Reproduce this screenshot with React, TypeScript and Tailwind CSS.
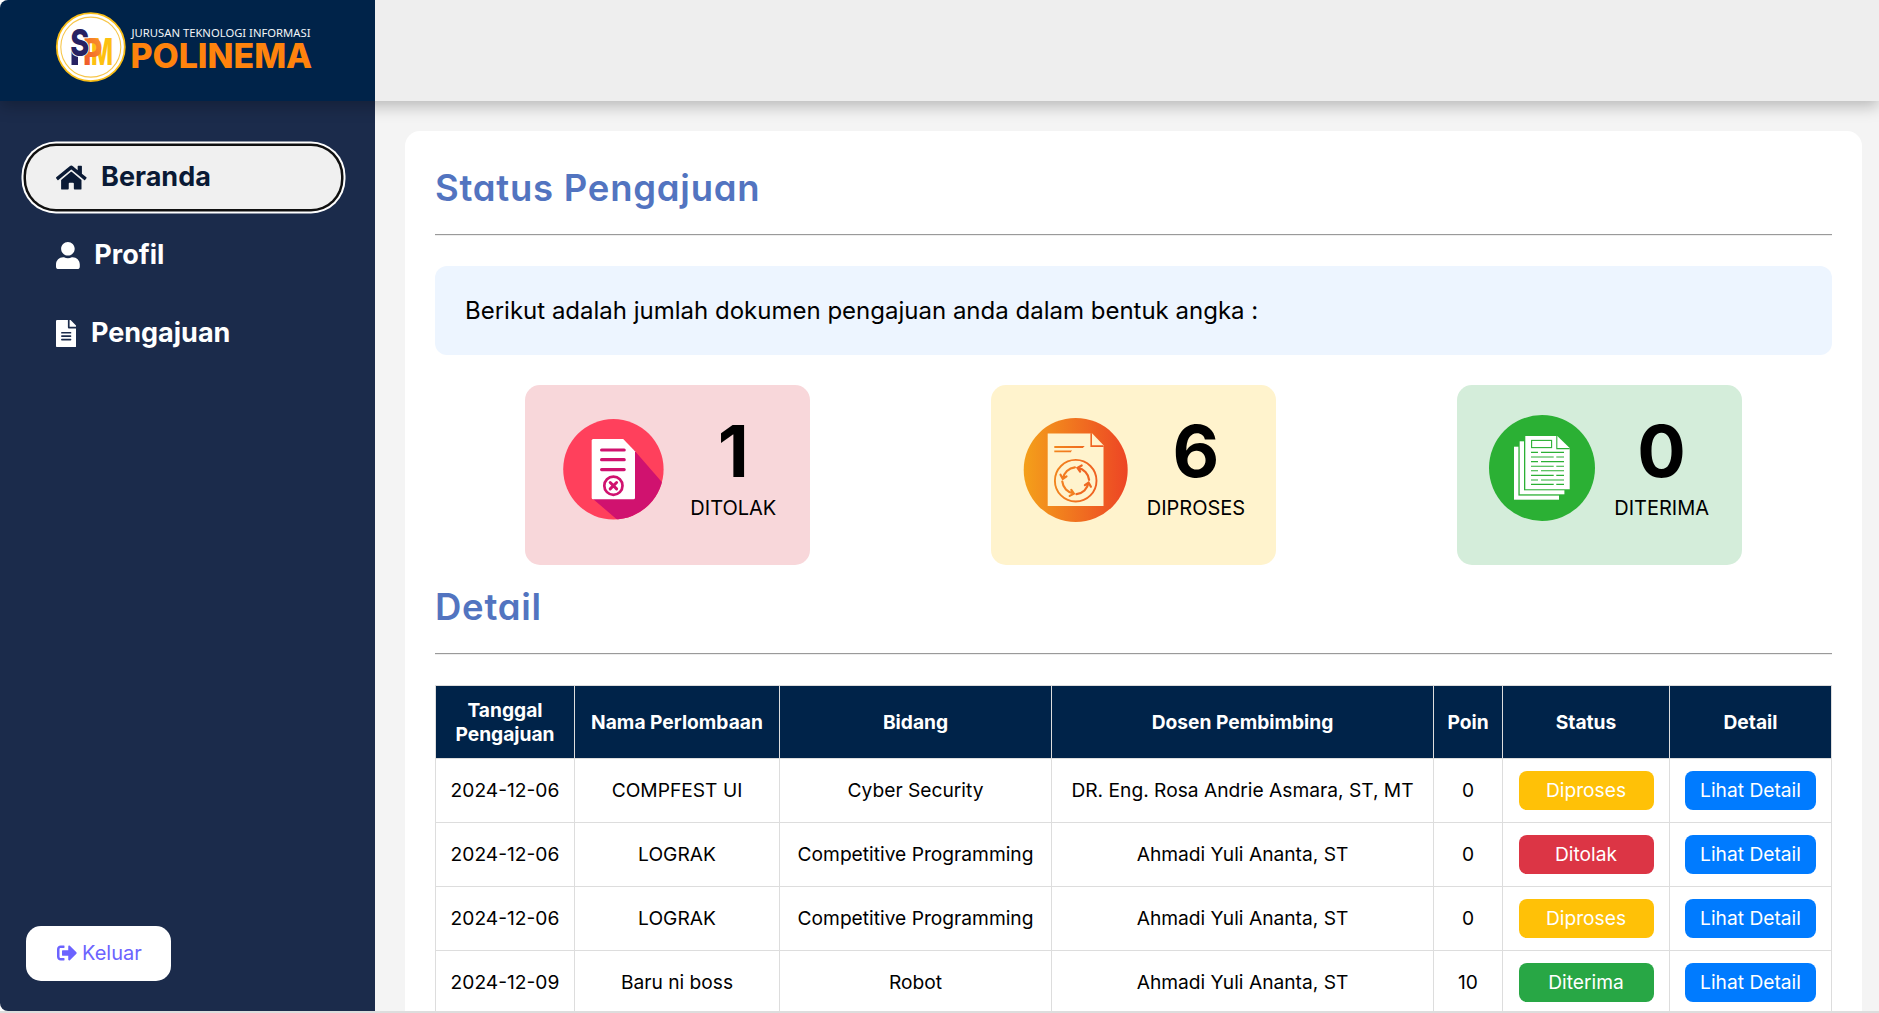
import type { ReactNode } from "react";
import { FaFileAlt, FaHome, FaSignOutAlt, FaUser } from "react-icons/fa";

function Logo() {
  return (
    <svg width="260" height="74" viewBox="54 10 260 74" className="block">
      <defs>
        <linearGradient id="logo-p" x1="0" y1="1" x2="1" y2="0">
          <stop offset="0" stopColor="#ee4a2b" />
          <stop offset="1" stopColor="#fba22a" />
        </linearGradient>
      </defs>
      <circle cx="90.8" cy="47.1" r="34" fill="#fff" stroke="#f9bd16" strokeWidth="1.8" />
      <circle cx="90.8" cy="47.1" r="30" fill="none" stroke="#f7c64a" strokeWidth="1.1" />
      <g fontFamily="Inter, sans-serif" fontWeight="800">
        <rect x="71.5" y="50" width="6.5" height="15" fill="#272262" />
        <text x="91" y="65" fontSize="37.5" textLength="22" lengthAdjust="spacingAndGlyphs" fill="#fdc010">M</text>
        <text x="83" y="65" fontSize="37.5" textLength="19.5" lengthAdjust="spacingAndGlyphs" fill="url(#logo-p)">P</text>
        <text
          x="70.2" y="55.5" fontSize="37" textLength="19" lengthAdjust="spacingAndGlyphs"
          fill="#272262" stroke="#fff" strokeWidth="1.8" style={{ paintOrder: "stroke" }}
        >
          S
        </text>
      </g>
      <text
        x="131.5" y="37.4" fontSize="11.6" textLength="179" lengthAdjust="spacingAndGlyphs"
        fontFamily="'Noto Sans', sans-serif" fill="#f2f5f8"
      >
        JURUSAN TEKNOLOGI INFORMASI
      </text>
      <text
        x="130.4" y="67.9" fontSize="33.6" textLength="181.8" lengthAdjust="spacingAndGlyphs"
        fontFamily="Inter, sans-serif" fontWeight="800" fill="#ff830d"
      >
        POLINEMA
      </text>
    </svg>
  );
}

function RejectedIcon() {
  return (
    <svg width="140" height="180" viewBox="0 0 140 180" className="shrink-0">
      <clipPath id="rejected-disc">
        <circle cx="88.4" cy="84.3" r="50.2" />
      </clipPath>
      <circle cx="88.4" cy="84.3" r="50.2" fill="#ff405c" />
      <path d="M109 65L150 112V150H110L67.5 113.5Z" fill="#d0126f" clipPath="url(#rejected-disc)" />
      <path d="M68.2 54H98.2L110 66.2V112.8Q110 114.3 108.5 114.3H68.2Q66.7 114.3 66.7 112.8V55.5Q66.7 54 68.2 54Z" fill="#fff" />
      <g stroke="#d0126f" fill="none" strokeLinecap="round">
        <path d="M76.6 65H99.2M76.6 74.7H99.2M76.6 84.6H99.2" strokeWidth="3.2" />
        <circle cx="88.4" cy="100.7" r="9.1" strokeWidth="2.7" />
        <path d="M85.2 97.5L91.6 103.9M91.6 97.5L85.2 103.9" strokeWidth="3" />
      </g>
    </svg>
  );
}

function ProcessIcon() {
  return (
    <svg width="140" height="180" viewBox="0 0 140 180" className="shrink-0">
      <defs>
        <linearGradient id="process-fill" gradientUnits="userSpaceOnUse" x1="32.7" y1="0" x2="136.7" y2="0">
          <stop offset="0" stopColor="#f4a01a" />
          <stop offset="1" stopColor="#ed4525" />
        </linearGradient>
      </defs>
      <circle cx="84.7" cy="84.9" r="52" fill="url(#process-fill)" />
      <path d="M56.7 48.5H101.3L112.5 60.2V121H56.7Z" fill="#fff3cd" />
      <g stroke="url(#process-fill)" fill="none">
        <path d="M100.2 48.3V61.1H112.6" strokeWidth="1.6" />
        <path d="M63.3 62.05H92.3V62.06M63.3 66.35H80V66.36" strokeWidth="1.9" />
        <circle cx="84.7" cy="95.7" r="20.8" strokeWidth="1.9" />
      </g>
      <g transform="translate(84.7 95.7)" fill="none" strokeWidth="2.2" strokeLinecap="round">
        {[["0", "#ef6522"], ["90", "#ef6a22"], ["180", "#f27f20"], ["270", "#f27b20"]].map(([angle, color]) => (
          <path
            key={angle}
            transform={`rotate(${angle})`}
            stroke={color}
            d="M13.4 -.8A13.4 13.4 0 0 0 2 -12.8M6 -15.2L1.8 -12.9L4.4 -9.2"
          />
        ))}
      </g>
    </svg>
  );
}

function AcceptedIcon() {
  const green = "#2bb034";
  return (
    <svg width="140" height="180" viewBox="0 0 140 180" className="shrink-0">
      <circle cx="85" cy="83" r="53" fill={green} />
      <rect x="57" y="61.7" width="45" height="53" fill="#fff" />
      <rect x="61.4" y="55" width="47.2" height="55.6" fill={green} />
      <rect x="62.7" y="56.3" width="44.7" height="53" fill="#fff" />
      <rect x="67" y="49.7" width="47" height="55.6" fill={green} />
      <path d="M68.3 51H100.3L112.7 63V104.2H68.3Z" fill="#fff" />
      <g stroke={green} fill="none" strokeWidth="1.1">
        <path d="M99.8 51V63.6H112.7" />
        <rect x="74.6" y="55.4" width="20" height="7.2" />
        <path d="M74 67.4h7M84 67.4h23M74 76.6h7M84 76.6h23M74 85.8h7M84 85.8h23M74 95h7M84 95h23" />
        <path d="M74 72h22.7M99.3 72h7.7M74 81.2h22.7M99.3 81.2h7.7M74 90.4h22.7M99.3 90.4h7.7M74 99.4h22.7M99.3 99.4h7.7" />
      </g>
    </svg>
  );
}

function NavItem({ icon, label, active }: { icon: ReactNode; label: string; active?: boolean }) {
  return (
    <a
      className={
        "flex h-[63px] w-[315px] items-center gap-[14.5px] rounded-[30px] pl-[30px] text-[27px] font-bold " +
        (active
          ? "bg-[#f0f0f0] text-[#0a1a35] shadow-[0_0_0_2.5px_#101010,0_0_0_4.5px_#ffffff]"
          : "text-white")
      }
    >
      {icon}
      <span>{label}</span>
    </a>
  );
}

function SectionTitle({ children }: { children: ReactNode }) {
  return (
    <>
      <h2 className="h-[55px] text-[36.5px] leading-[54px] font-semibold tracking-[0.75px] text-[#5274c0] [font-feature-settings:'cv11']">
        {children}
      </h2>
      <div className="mt-[18px] mb-[30px] h-[2px] border-t border-b border-t-[#9a9a9a] border-b-[#eeeeee]" />
    </>
  );
}

function StatCard({ color, icon, value, label, shift }: { color: string; icon: ReactNode; value: string; label: string; shift?: string }) {
  return (
    <div className={"flex h-[180px] w-[285px] rounded-[15px] " + color}>
      {icon}
      <div className={"flex w-[130px] shrink-0 flex-col items-center pt-[22px] " + (shift ?? "")}>
        <span className="text-[72px] leading-[88px] font-bold">{value}</span>
        <span className="text-[20px] leading-[27px]">{label}</span>
      </div>
    </div>
  );
}

const badge: Record<string, string> = {
  Diproses: "bg-[#ffc107]",
  Ditolak: "bg-[#dc3545]",
  Diterima: "bg-[#28a745]",
};

const rows = [
  ["2024-12-06", "COMPFEST UI", "Cyber Security", "DR. Eng. Rosa Andrie Asmara, ST, MT", "0", "Diproses"],
  ["2024-12-06", "LOGRAK", "Competitive Programming", "Ahmadi Yuli Ananta, ST", "0", "Ditolak"],
  ["2024-12-06", "LOGRAK", "Competitive Programming", "Ahmadi Yuli Ananta, ST", "0", "Diproses"],
  ["2024-12-09", "Baru ni boss", "Robot", "Ahmadi Yuli Ananta, ST", "10", "Diterima"],
];

const headers = ["Tanggal Pengajuan", "Nama Perlombaan", "Bidang", "Dosen Pembimbing", "Poin", "Status", "Detail"];

export default function App() {
  return (
    <div className="h-[1013px] w-[1879px] overflow-hidden border-b-2 border-[#dddddd] bg-white font-['Inter',sans-serif] text-black">
      <div className="flex h-[1011px] flex-col overflow-hidden rounded-l-[8px] bg-[#f4f4f4]">
        <header className="relative z-10 flex h-[101px] shrink-0 bg-[#eeeeee] shadow-[0_5px_15px_rgba(0,0,0,0.25)]">
          <div className="w-[375px] bg-[#002349] pt-[10px] pl-[54px]">
            <Logo />
          </div>
        </header>
        <div className="flex min-h-0 flex-1">
          <aside className="flex w-[375px] shrink-0 flex-col justify-between bg-[#1b2b4b] px-[26px] pt-[45px] pb-[30px]">
            <nav className="flex flex-col gap-[15px]">
              <NavItem icon={<FaHome className="h-[27.2px] w-[30.6px]" />} label="Beranda" active />
              <NavItem icon={<FaUser className="h-[27.2px] w-[23.8px]" />} label="Profil" />
              <NavItem icon={<FaFileAlt className="h-[27.2px] w-[20.4px]" />} label="Pengajuan" />
            </nav>
            <button className="flex h-[55px] w-[145px] items-center gap-[5px] rounded-[15px] bg-white pb-px pl-[31px] text-[20px] text-[#6c63ff]">
              <FaSignOutAlt className="size-[20px]" />
              <span>Keluar</span>
            </button>
          </aside>
          <main className="min-w-0 flex-1 overflow-hidden pt-[30px] pr-[17px] pl-[30px]">
            <section className="min-h-full rounded-t-[15px] bg-white p-[30px]">
              <SectionTitle>Status Pengajuan</SectionTitle>
              <p className="flex h-[89px] items-center rounded-[12px] bg-[#edf5ff] pl-[30px] text-[24px]">
                Berikut adalah jumlah dokumen pengajuan anda dalam bentuk angka :
              </p>
              <div className="mt-[30px] mb-[15px] flex justify-around">
                <StatCard color="bg-[#f8d7da]" icon={<RejectedIcon />} value="1" label="DITOLAK" shift="ml-[3px]" />
                <StatCard color="bg-[#fff3cd]" icon={<ProcessIcon />} value="6" label="DIPROSES" />
                <StatCard color="bg-[#d4edda]" icon={<AcceptedIcon />} value="0" label="DITERIMA" />
              </div>
              <SectionTitle>Detail</SectionTitle>
              <table className="w-[1397px] table-fixed border-separate border-spacing-0 border-r border-b border-[#dddddd] text-center text-[19.2px] leading-[24px]">
                <colgroup>
                  <col className="w-[139px]" />
                  <col className="w-[205px]" />
                  <col className="w-[272px]" />
                  <col className="w-[382px]" />
                  <col className="w-[69px]" />
                  <col className="w-[167px]" />
                  <col className="w-[162px]" />
                </colgroup>
                <thead>
                  <tr className="h-[73px] bg-[#002349] text-white">
                    {headers.map((h) => (
                      <th key={h} className="border-t border-l border-[#dddddd] font-bold">
                        {h}
                      </th>
                    ))}
                  </tr>
                </thead>
                <tbody>
                  {rows.map((row, i) => (
                    <tr key={i} className="h-[64px]">
                      {row.slice(0, 5).map((cell, j) => (
                        <td key={j} className="border-t border-l border-[#dddddd] pb-[2px]">
                          {cell}
                        </td>
                      ))}
                      <td className="border-t border-l border-[#dddddd]">
                        <span className={"mx-auto block h-[39px] w-[135px] rounded-[8px] leading-[38px] text-white " + badge[row[5]]}>
                          {row[5]}
                        </span>
                      </td>
                      <td className="border-t border-l border-[#dddddd]">
                        <button className="mx-auto block h-[39px] w-[131px] rounded-[8px] bg-[#007bff] leading-[39px] text-white">
                          Lihat Detail
                        </button>
                      </td>
                    </tr>
                  ))}
                </tbody>
              </table>
            </section>
          </main>
        </div>
      </div>
    </div>
  );
}
